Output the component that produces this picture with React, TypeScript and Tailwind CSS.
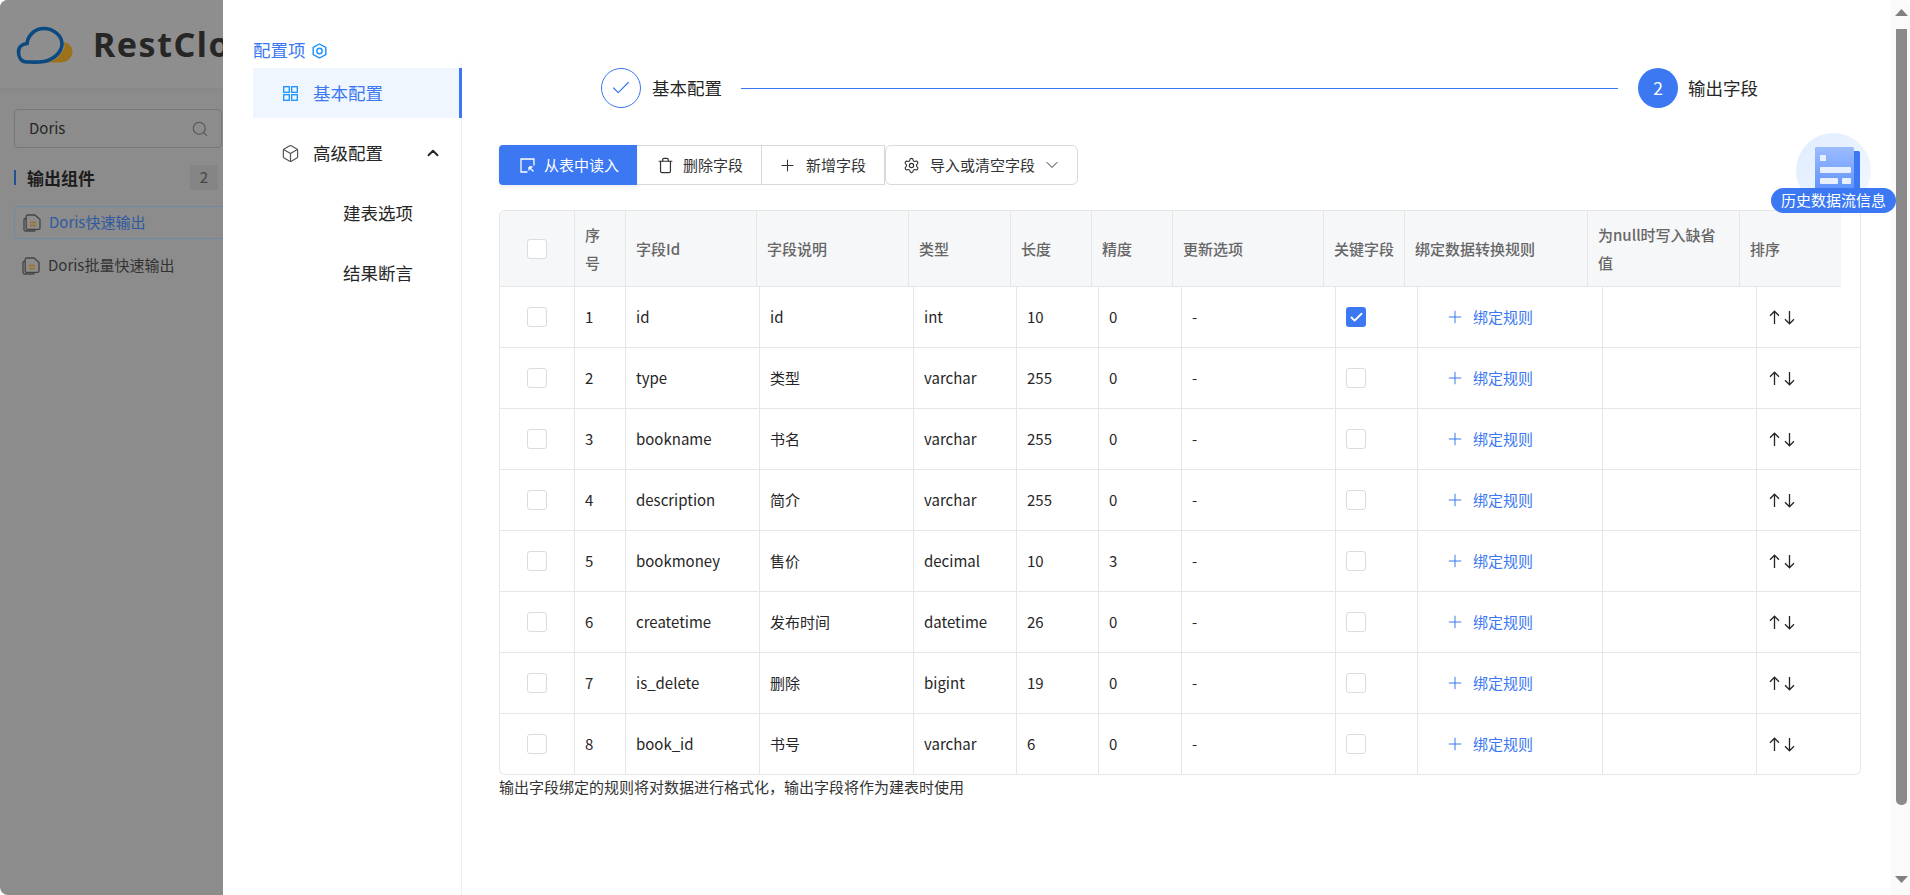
import React from "react";
import { Box, Check, ChevronDown, ChevronUp, Plus, Search, Settings, Trash } from "lucide-react";

const headers = ["序号", "字段Id", "字段说明", "类型", "长度", "精度", "更新选项", "关键字段", "绑定数据转换规则", "为null时写入缺省值", "排序"];

const rows = [
  { id: "id", desc: "id", type: "int", len: "10", scale: "0", key: true },
  { id: "type", desc: "类型", type: "varchar", len: "255", scale: "0" },
  { id: "bookname", desc: "书名", type: "varchar", len: "255", scale: "0" },
  { id: "description", desc: "简介", type: "varchar", len: "255", scale: "0" },
  { id: "bookmoney", desc: "售价", type: "decimal", len: "10", scale: "3" },
  { id: "createtime", desc: "发布时间", type: "datetime", len: "26", scale: "0" },
  { id: "is_delete", desc: "删除", type: "bigint", len: "19", scale: "0" },
  { id: "book_id", desc: "书号", type: "varchar", len: "6", scale: "0" },
];

const DocIcon = () => (
  <svg width="18" height="18" viewBox="0 0 18 18" fill="none" className="shrink-0">
    <path d="M3 4.5H2.2C1.5 4.5 1 5 1 5.7V15.5C1 16.3 1.6 17 2.4 17H11C11.7 17 12.3 16.5 12.3 15.8" stroke="#444" strokeWidth="1.3" />
    <path d="M4.5 1H12L17 5.5V14C17 14.8 16.4 15.4 15.6 15.4H4.5C3.7 15.4 3.2 14.8 3.2 14V2.3C3.2 1.6 3.8 1 4.5 1Z" stroke="#444" strokeWidth="1.3" />
    <path d="M7 8.5H13M7 11.5H13" stroke="#a5701a" strokeWidth="1.4" />
  </svg>
);

const Logo = () => (
  <svg width="60" height="41" viewBox="15 23 60 41" fill="none" className="shrink-0">
    <path d="M64 41C69 42 72.5 46 72.5 50C72.5 57 67 61.5 60 61.5H46C55 60 62 54 64.5 46Z" fill="#9c7119" />
    <path d="M27 61C21 61 18.5 56 18.5 51C18.5 46 22 43 27 42.5C28 34 35 27.5 43.5 27.5C54 27.5 62 35 62 43C62 52 52 59 44 60.5C38 61.5 32 61 27 61Z" stroke="#0a4a80" strokeWidth="3.6" />
  </svg>
);

const ImportIcon = () => (
  <svg width="15" height="15" viewBox="0 0 15 15" fill="none" stroke="white" strokeWidth="1.3" className="shrink-0">
    <path d="M7.5 14H1V1H14V7.5" />
    <path d="M13.5 13.5L9 9M9 9V12.5M9 9H12.5" />
  </svg>
);

const SortArrows = () => (
  <svg width="30" height="15" viewBox="0 0 30 15" fill="none" stroke="#262626" strokeWidth="1.3">
    <path d="M7.5 14V1.2M3 5.7L7.5 1.2L12 5.7" />
    <path d="M22.5 1V13.8M18 9.3L22.5 13.8L27 9.3" />
  </svg>
);

const HistoryBadge = () => (
  <svg width="75" height="75" viewBox="0 0 75 75" className="absolute left-[1334px] top-[133px]">
    <defs>
      <linearGradient id="bg" x1="0" y1="0" x2="1" y2="1">
        <stop offset="0" stopColor="#dfecff" />
        <stop offset="1" stopColor="#f3f8ff" />
      </linearGradient>
      <linearGradient id="page" x1="0" y1="0" x2="0" y2="1">
        <stop offset="0" stopColor="#9dbcff" />
        <stop offset="1" stopColor="#5b90fb" />
      </linearGradient>
    </defs>
    <circle cx="37.5" cy="37.5" r="37.5" fill="url(#bg)" />
    <rect x="56" y="18" width="8" height="42" rx="1.5" fill="#3b78f2" />
    <path d="M19 15.5C19 14.7 19.7 14 20.5 14H56.5C57.3 14 58 14.7 58 15.5V60H19Z" fill="url(#page)" />
    <rect x="24" y="22" width="6" height="6" fill="#e8f0ff" />
    <rect x="24" y="34" width="31" height="6" rx="1" fill="#e8f0ff" />
    <rect x="24" y="45" width="18" height="6" rx="1" fill="#e8f0ff" />
    <rect x="46" y="45" width="9" height="6" rx="1" fill="#e8f0ff" />
  </svg>
);

const Checkbox = ({ checked }: { checked?: boolean }) =>
  checked ? (
    <span className="flex h-5 w-5 items-center justify-center rounded-[3px] bg-[#3b78f2]">
      <Check size={15} color="white" strokeWidth={3} />
    </span>
  ) : (
    <span className="block h-5 w-5 rounded-[3px] border border-[#dcdcdc] bg-white" />
  );

const Sidebar = () => (
  <div className="flex w-[239px] shrink-0 flex-col pl-[30px]">
    <div className="mt-[38px] flex h-[25px] items-center gap-[6px] text-[17.5px] text-[#3b78f2]">
      配置项
      <svg width="15" height="16" viewBox="0 0 15 16" fill="none" stroke="#1890ff" strokeWidth="1.4">
        <path d="M7.5 1L13.8 4.5V11.5L7.5 15L1.2 11.5V4.5Z" />
        <circle cx="7.5" cy="8" r="2.7" />
      </svg>
    </div>
    <div className="flex flex-1 flex-col gap-[10px] border-r border-[#eeeeee] pt-[5px] text-[17.5px] text-[#262626]">
      <div className="flex h-[50px] w-[209px] items-center gap-[15px] border-r-[3px] border-[#3b78f2] bg-[#f0f6ff] pl-[30px] text-[#3b78f2]">
        <svg width="15" height="15" viewBox="0 0 15 15" fill="none" stroke="#1890ff" strokeWidth="1.3">
          <rect x="0.7" y="0.7" width="5.6" height="5.6" />
          <rect x="8.7" y="0.7" width="5.6" height="5.6" />
          <rect x="0.7" y="8.7" width="5.6" height="5.6" />
          <rect x="8.7" y="8.7" width="5.6" height="5.6" />
        </svg>
        基本配置
      </div>
      <div className="flex h-[50px] items-center pl-[28px] pr-[19px]">
        <Box size={19} strokeWidth={1.5} color="#555" className="mr-[13px]" />
        高级配置
        <ChevronUp size={18} strokeWidth={2.5} color="#262626" className="ml-auto" />
      </div>
      <div className="flex h-[50px] items-center pl-[90px]">建表选项</div>
      <div className="flex h-[50px] items-center pl-[90px]">结果断言</div>
    </div>
  </div>
);

const LeftPage = () => (
  <div className="flex w-[223px] shrink-0 flex-col overflow-hidden bg-[#8c8c8c]">
    <div className="flex h-[88px] shrink-0 items-center gap-[18px] bg-[#8e8e8e] pl-[15px] shadow-[0_2px_6px_rgba(0,0,0,0.05)]">
      <Logo />
      <span className="whitespace-nowrap font-['Noto_Sans',sans-serif] text-[34px] font-bold tracking-[1.5px] text-[#262626]">RestCloud</span>
    </div>
    <div className="flex flex-col pl-[14px] pt-[21px]">
      <div className="flex h-[39px] w-[208px] items-center justify-between rounded-[4px] border border-[#777] pl-[14px] pr-[12px] text-[15px] text-[#262626]">
        Doris
        <Search size={18} color="#555" strokeWidth={1.4} />
      </div>
      <div className="mt-[17px] flex h-[25px] w-[204px] items-center justify-between">
        <div className="flex items-center gap-[11px] text-[17px] font-bold text-[#1c1c1c]">
          <span className="h-[15px] w-[2px] bg-[#23508f]" />
          输出组件
        </div>
        <span className="flex h-[25px] w-[28px] items-center justify-center bg-[#858585] text-[15px] text-[#444]">2</span>
      </div>
      <div className="mt-[16px] flex h-[33px] w-[230px] items-center gap-[8px] rounded-[4px] border border-[#6f87a8] pl-[8px] text-[15px] text-[#2f5aa0]">
        <DocIcon />
        Doris快速输出
      </div>
      <div className="mt-[10px] flex h-[33px] items-center gap-[8px] pl-[8px] text-[15px] text-[#333]">
        <DocIcon />
        Doris批量快速输出
      </div>
    </div>
  </div>
);

const Toolbar = () => (
  <div className="flex h-10 text-[15px] text-[#333]">
    <div className="flex w-[138px] items-center gap-[9px] rounded-l-[4px] bg-[#3b78f2] pl-[21px] text-white shadow-[0_2px_4px_rgba(0,0,0,0.08)]">
      <ImportIcon />
      从表中读入
    </div>
    <div className="flex w-[125px] items-center gap-[9px] border-y border-r border-[#d9d9d9] pl-[20px]">
      <Trash size={17} strokeWidth={1.7} />
      删除字段
    </div>
    <div className="flex w-[123px] items-center gap-[9px] border-y border-r border-[#d9d9d9] pl-[16px]">
      <Plus size={19} strokeWidth={1.3} />
      新增字段
    </div>
    <div className="flex w-[193px] items-center rounded-[6px] border border-[#d9d9d9] pl-[17px]">
      <Settings size={17} strokeWidth={1.6} className="mr-[10px]" />
      导入或清空字段
      <ChevronDown size={20} strokeWidth={1.2} className="ml-[7px]" />
    </div>
  </div>
);

const FieldTable = () => (
  <div className="w-[1362px] rounded-b-[6px] rounded-tl-[6px] border border-[#e6e6e6] text-[15px]">
    <div className="grid h-[76px] w-[1341px] grid-cols-[74px_51px_131px_152px_102px_81px_81px_151px_81px_183px_152px_102px] rounded-tl-[6px] border-b border-[#e6e6e6] bg-[#f6f7f9] font-medium leading-[28px] text-[#666666]">
      <div className="flex items-center justify-center">
        <Checkbox />
      </div>
      {headers.map((h) => (
        <div key={h} className={`flex items-center border-l border-[#e6e6e6] pl-[10px] ${h === "关键字段" ? "pr-0" : "pr-[11px]"}`}>
          {h}
        </div>
      ))}
    </div>
    {rows.map((r, i) => (
      <div key={r.id} className="grid h-[61px] grid-cols-[74px_51px_134px_154px_103px_82px_83px_154px_82px_185px_154px_104px] border-b border-[#e6e6e6] text-[#262626] last:h-[60px] last:border-b-0">
        <div className="flex items-center justify-center">
          <Checkbox />
        </div>
        <div className="flex items-center border-l border-[#e6e6e6] pl-[10px]">{i + 1}</div>
        <div className="flex items-center border-l border-[#e6e6e6] pl-[10px]">{r.id}</div>
        <div className="flex items-center border-l border-[#e6e6e6] pl-[10px]">{r.desc}</div>
        <div className="flex items-center border-l border-[#e6e6e6] pl-[10px]">{r.type}</div>
        <div className="flex items-center border-l border-[#e6e6e6] pl-[10px]">{r.len}</div>
        <div className="flex items-center border-l border-[#e6e6e6] pl-[10px]">{r.scale}</div>
        <div className="flex items-center border-l border-[#e6e6e6] pl-[10px]">-</div>
        <div className="flex items-center border-l border-[#e6e6e6] pl-[10px]">
          <Checkbox checked={r.key} />
        </div>
        <div className="flex items-center gap-[8px] border-l border-[#e6e6e6] pl-[27px] text-[#3b78f2]">
          <Plus size={20} strokeWidth={1.2} />
          绑定规则
        </div>
        <div className="border-l border-[#e6e6e6]" />
        <div className="flex items-center border-l border-[#e6e6e6] pl-[10px]">
          <SortArrows />
        </div>
      </div>
    ))}
  </div>
);

const Content = () => (
  <div className="relative flex-1 pl-[37px]">
    <div className="ml-[102px] mt-[68px] flex h-10 w-[1157px] items-center text-[17.5px] text-[#262626]">
      <span className="flex h-10 w-10 items-center justify-center rounded-full border border-[#3b78f2]">
        <Check size={22} color="#3b78f2" strokeWidth={1.3} />
      </span>
      <span className="ml-[11px]">基本配置</span>
      <span className="ml-[19px] mr-5 h-px flex-1 bg-[#3b78f2]" />
      <span className="flex h-10 w-10 items-center justify-center rounded-full bg-[#3b78f2] text-white">2</span>
      <span className="ml-[10px] whitespace-nowrap">输出字段</span>
    </div>
    <div className="mt-[37px]">
      <Toolbar />
    </div>
    <div className="mt-[25px]">
      <FieldTable />
    </div>
    <p className="text-[15px] leading-[24px] text-[#333]">输出字段绑定的规则将对数据进行格式化，输出字段将作为建表时使用</p>
    <HistoryBadge />
    <div className="absolute left-[1309px] top-[188px] flex h-[25px] w-[125px] items-center justify-center rounded-full bg-[#3b78f2] text-[15px] text-white">
      历史数据流信息
    </div>
  </div>
);

const PageScrollbar = () => (
  <div className="flex w-[19px] shrink-0 flex-col items-center bg-[#fafafa] pl-[1px]">
    <svg width="13" height="7" viewBox="0 0 13 7" className="mt-[9px]">
      <polygon points="6.5,0 13,7 0,7" fill="#808080" />
    </svg>
    <div className="mt-[13px] h-[776px] w-[11px] rounded-b-[5px] bg-[#8a8a8a]" />
    <svg width="13" height="7" viewBox="0 0 13 7" className="mt-[71px]">
      <polygon points="0,0 13,0 6.5,7" fill="#808080" />
    </svg>
  </div>
);

const App = () => (
  <div className="flex h-[895px] w-[1910px] overflow-hidden rounded-lg bg-white font-['Noto_Sans_CJK_SC','Noto_Sans',sans-serif]">
    <LeftPage />
    <Sidebar />
    <Content />
    <PageScrollbar />
  </div>
);

export default App;
